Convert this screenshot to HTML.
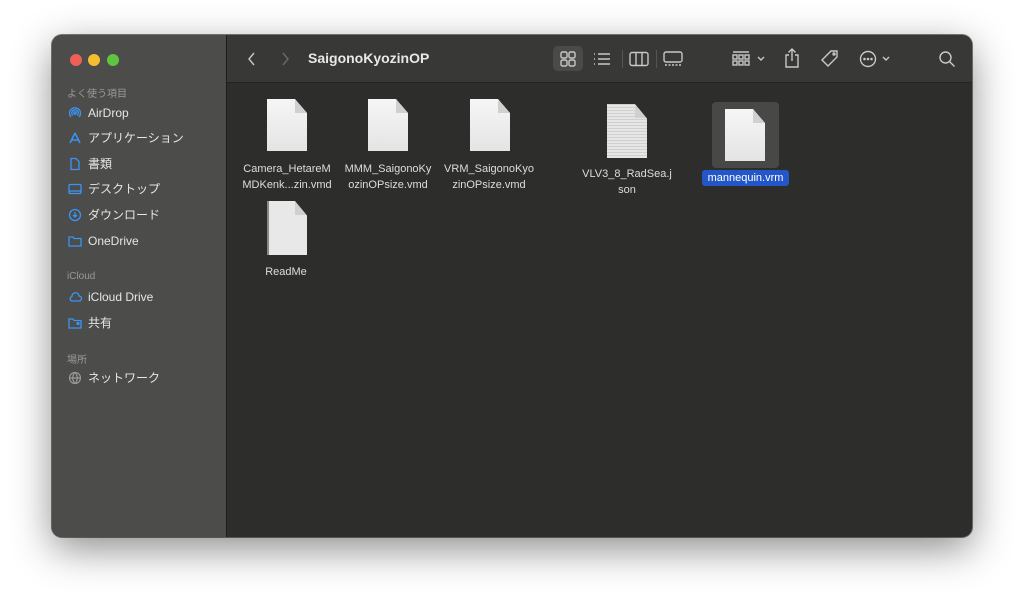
<!DOCTYPE html><html><head><meta charset="utf-8"><style>
body{margin:0;width:1024px;height:606px;background:#fff;position:relative;overflow:hidden;font-family:"Liberation Sans","Noto Sans CJK JP",sans-serif}
.win{position:absolute;left:52px;top:35px;width:920px;height:502px;border-radius:10px;overflow:hidden;background:#2d2d2b;box-shadow:0 12px 40px rgba(0,0,0,.45),0 0 0 1px rgba(0,0,0,.5)}
.side{position:absolute;left:0;top:0;width:174px;height:100%;background:#4c4c4b;border-right:1px solid #1c1c1c}
.tb{position:absolute;left:175px;top:0;right:0;height:47px;background:#383836;border-bottom:1px solid #222}
.dot{position:absolute;top:19px;width:12px;height:12px;border-radius:50%}
.hd{position:absolute;left:15px;font-size:10px;color:#9a9a9a}
.it{position:absolute;left:16px;height:16px;line-height:16px;font-size:12px;color:#e6e6e6;display:flex;align-items:center}
.it svg{margin-right:6px;flex:none}
.f{position:absolute;width:40px;height:52px;background:linear-gradient(#f6f6f6,#e4e4e4);clip-path:polygon(0 0,70% 0,100% 27%,100% 100%,0 100%)}
.f:after{content:"";position:absolute;right:0;top:0;width:12px;height:14px;background:linear-gradient(45deg,#d0d0d0 50%,transparent 50%)}
.lb{position:absolute;width:100px;text-align:center;font-size:11px;color:#ddd;line-height:16px}
svg.t{position:absolute;stroke:#c8c8c8;fill:none;stroke-width:1.4}
</style></head><body>
<div class="win">
<div class="side">
<div class="dot" style="left:18px;background:#ee5f57"></div>
<div class="dot" style="left:36px;background:#f5bd30"></div>
<div class="dot" style="left:55px;background:#5ec441"></div>
<div class="hd" style="top:50px">よく使う項目</div>
<div class="it" style="top:70px"><svg width="14" height="14" stroke="#3a95f5" fill="none" stroke-width="1.3"><path d="M3 11A5.5 5.5 0 1 1 11 11M4.8 9.5A3.3 3.3 0 1 1 9.2 9.5"/><circle cx="7" cy="7" r="1.2"/></svg>AirDrop</div>
<div class="it" style="top:95px"><svg width="14" height="14" stroke="#3a95f5" fill="none" stroke-width="1.5"><path d="M7 2L2 12M7 2l5 10M3 9h8"/></svg>アプリケーション</div>
<div class="it" style="top:121px"><svg width="14" height="14" stroke="#3a95f5" fill="none" stroke-width="1.3"><path d="M3 1.5h5l3 3v8H3z"/></svg>書類</div>
<div class="it" style="top:146px"><svg width="14" height="14" stroke="#3a95f5" fill="none" stroke-width="1.3"><rect x="1" y="2.5" width="12" height="9" rx="1"/><path d="M1 9h12"/></svg>デスクトップ</div>
<div class="it" style="top:172px"><svg width="14" height="14" stroke="#3a95f5" fill="none" stroke-width="1.3"><circle cx="7" cy="7" r="5.5"/><path d="M7 4v5M5 7l2 2 2-2"/></svg>ダウンロード</div>
<div class="it" style="top:198px"><svg width="14" height="14" stroke="#3a95f5" fill="none" stroke-width="1.3"><path d="M1 3h4l1 1.5h7V12H1z"/></svg>OneDrive</div>
<div class="hd" style="top:236px">iCloud</div>
<div class="it" style="top:254px"><svg width="14" height="14" stroke="#3a95f5" fill="none" stroke-width="1.3"><path d="M4 11h7a2.5 2.5 0 0 0 0-5A3.5 3.5 0 0 0 4 6.5 2.3 2.3 0 0 0 4 11z"/></svg>iCloud Drive</div>
<div class="it" style="top:280px"><svg width="14" height="14" stroke="#3a95f5" fill="none" stroke-width="1.3"><path d="M1 3h4l1 1.5h7V12H1z"/><circle cx="10" cy="7.5" r="1"/></svg>共有</div>
<div class="hd" style="top:316px">場所</div>
<div class="it" style="top:335px"><svg width="14" height="14" stroke="#999" fill="none" stroke-width="1.2"><circle cx="7" cy="7" r="5.5"/><path d="M1.5 7h11M7 1.5c-3 3-3 8 0 11M7 1.5c3 3 3 8 0 11"/></svg>ネットワーク</div>
</div>
<div class="tb">
<svg class="t" style="left:20px;top:16px" width="10" height="16" stroke-width="1.8"><path d="M7 2L2 8l5 6"/></svg>
<svg class="t" style="left:53px;top:16px;stroke:#6a6a6a" width="10" height="16" stroke-width="1.8"><path d="M3 2l5 6-5 6"/></svg>
<div style="position:absolute;left:81px;top:15px;font-size:14px;font-weight:bold;color:#e8e8e8">SaigonoKyozinOP</div>
<div style="position:absolute;left:326px;top:11px;width:30px;height:25px;border-radius:5px;background:#4a4a48"></div>
<svg class="t" style="left:333px;top:16px" width="16" height="16"><rect x="1" y="1" width="6" height="6" rx="1.5"/><rect x="9" y="1" width="6" height="6" rx="1.5"/><rect x="1" y="9" width="6" height="6" rx="1.5"/><rect x="9" y="9" width="6" height="6" rx="1.5"/></svg>
<svg class="t" style="left:366px;top:17px" width="18" height="14"><path d="M1 2h1M1 7h1M1 12h1M5 2h12M5 7h12M5 12h12"/></svg>
<div style="position:absolute;left:395px;top:15px;width:1px;height:18px;background:#555"></div>
<svg class="t" style="left:402px;top:16px" width="20" height="16"><rect x="1" y="1.5" width="18" height="13" rx="2"/><path d="M7 1.5v13M13 1.5v13"/></svg>
<div style="position:absolute;left:429px;top:15px;width:1px;height:18px;background:#555"></div>
<svg class="t" style="left:436px;top:16px" width="20" height="16"><rect x="1" y="1" width="18" height="10" rx="2"/><path d="M2 14h16" stroke-dasharray="2 1.5"/></svg>
<svg class="t" style="left:505px;top:16px" width="18" height="16" stroke-width="1.1"><path d="M1 1h16"/><rect x="1" y="4" width="4" height="4"/><rect x="7" y="4" width="4" height="4"/><rect x="13" y="4" width="4" height="4"/><rect x="1" y="10" width="4" height="4"/><rect x="7" y="10" width="4" height="4"/><rect x="13" y="10" width="4" height="4"/></svg>
<svg class="t" style="left:529px;top:21px" width="10" height="6"><path d="M2 1l3 3 3-3"/></svg>
<svg class="t" style="left:557px;top:12px" width="16" height="22"><path d="M5 8H2v12h12V8h-3M8 14V2M4.5 5.5L8 2l3.5 3.5"/></svg>
<svg class="t" style="left:593px;top:14px" width="20" height="20"><path d="M11 2h6v6l-9 9-6-6z"/><circle cx="14" cy="5" r="1"/></svg>
<svg class="t" style="left:632px;top:15px" width="18" height="18"><circle cx="9" cy="9" r="7.5"/><circle cx="5.5" cy="9" r=".6" fill="#c8c8c8"/><circle cx="9" cy="9" r=".6" fill="#c8c8c8"/><circle cx="12.5" cy="9" r=".6" fill="#c8c8c8"/></svg>
<svg class="t" style="left:654px;top:21px" width="10" height="6"><path d="M2 1l3 3 3-3"/></svg>
<svg class="t" style="left:711px;top:15px" width="18" height="18" stroke-width="1.6"><circle cx="7.5" cy="7.5" r="5.5"/><path d="M11.5 11.5l5 5"/></svg>
</div>
<div class="f" style="left:215px;top:64px"></div>
<div class="lb" style="left:185px;top:126px">Camera_HetareM<br>MDKenk...zin.vmd</div>
<div class="f" style="left:316px;top:64px"></div>
<div class="lb" style="left:286px;top:126px">MMM_SaigonoKy<br>ozinOPsize.vmd</div>
<div class="f" style="left:418px;top:64px"></div>
<div class="lb" style="left:387px;top:126px">VRM_SaigonoKyo<br>zinOPsize.vmd</div>
<div class="f" style="left:555px;top:69px;height:54px;background:repeating-linear-gradient(#d0d0d0 0 1px,#e6e6e6 1px 3px)"></div>
<div class="lb" style="left:525px;top:131px">VLV3_8_RadSea.j<br>son</div>
<div style="position:absolute;left:660px;top:67px;width:67px;height:66px;background:#484846;border-radius:4px"></div>
<div class="f" style="left:673px;top:74px"></div>
<div style="position:absolute;left:650px;top:135px;width:87px;height:16px;background:#2357c7;border-radius:3px;color:#fff;font-size:11px;text-align:center;line-height:16px">mannequin.vrm</div>
<div class="f" style="left:215px;top:166px;height:54px;background:repeating-linear-gradient(90deg,#888 0 2px,#e8e8e8 2px 40px)"></div>
<div class="lb" style="left:184px;top:229px">ReadMe</div>
</div>
</body></html>
